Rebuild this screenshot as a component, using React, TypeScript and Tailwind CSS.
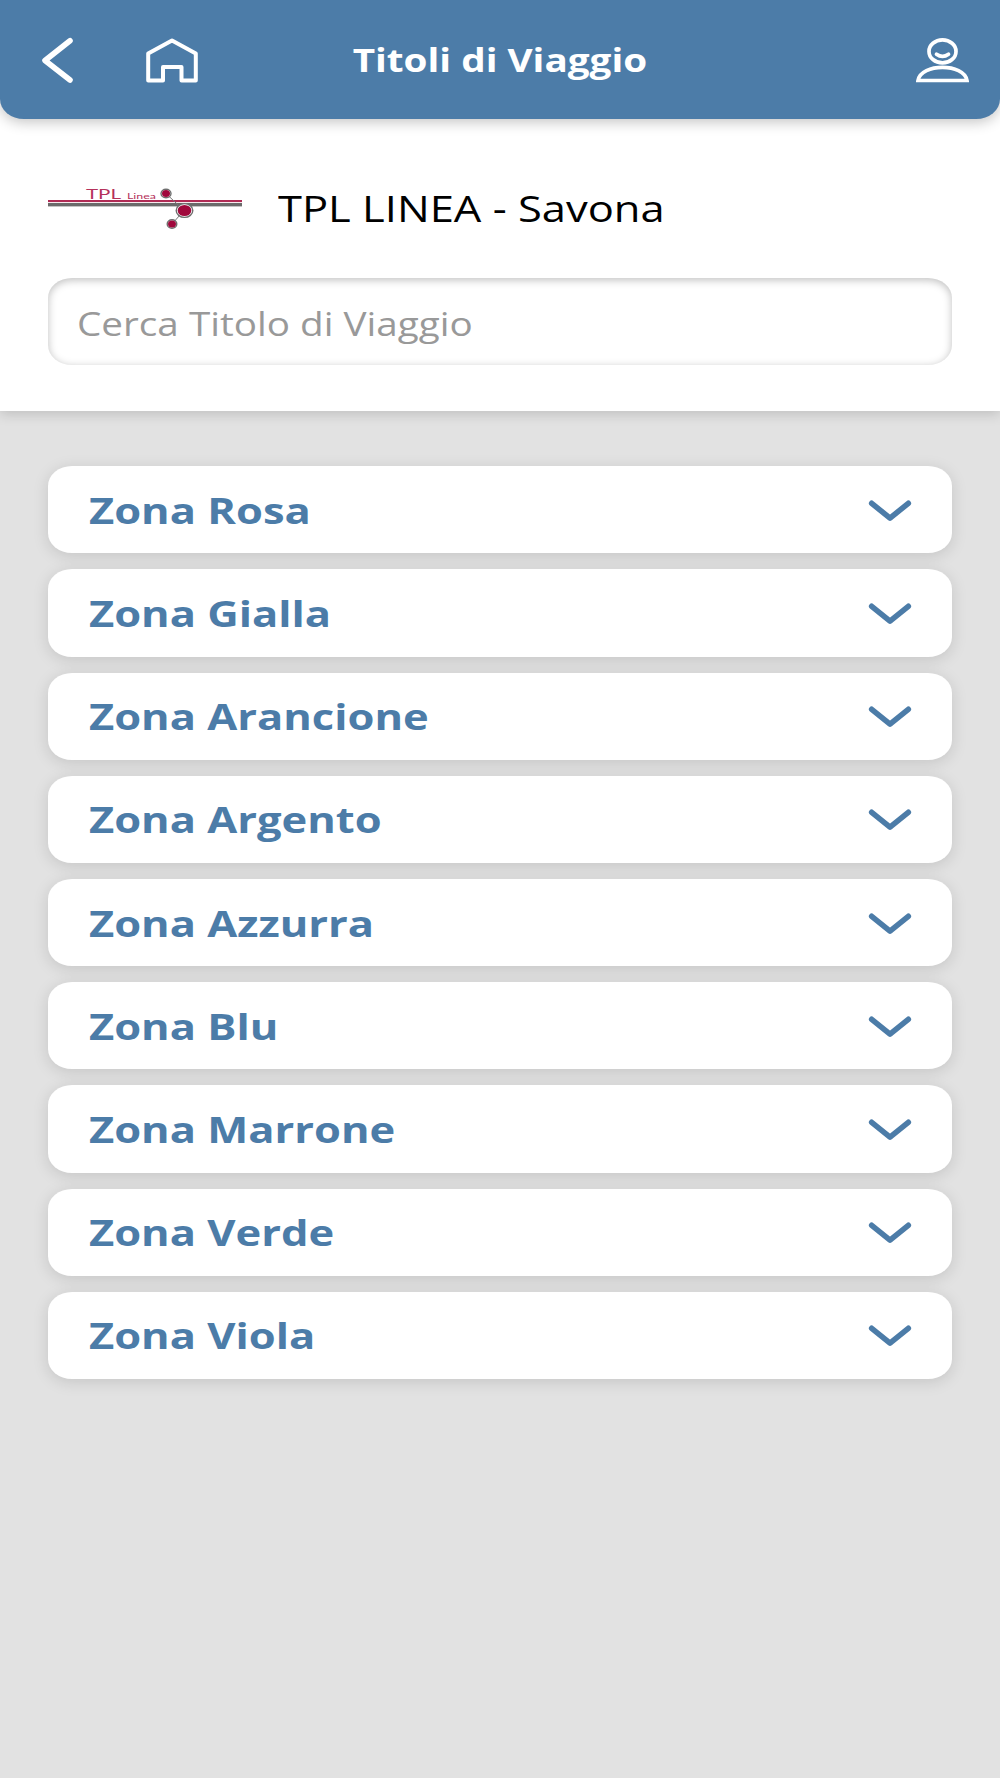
import { useState } from 'react'

interface Zone {
  id: string
  name: string
}

const T = {
  title: 'Titoli di Viaggio',
  company: 'TPL LINEA - Savona',
  search: 'Cerca Titolo di Viaggio',
  back: 'Indietro',
  home: 'Home',
  profile: 'Profilo',
}

const ZONES: Zone[] = [
  { id: 'rosa', name: 'Zona Rosa' },
  { id: 'gialla', name: 'Zona Gialla' },
  { id: 'arancione', name: 'Zona Arancione' },
  { id: 'argento', name: 'Zona Argento' },
  { id: 'azzurra', name: 'Zona Azzurra' },
  { id: 'blu', name: 'Zona Blu' },
  { id: 'marrone', name: 'Zona Marrone' },
  { id: 'verde', name: 'Zona Verde' },
  { id: 'viola', name: 'Zona Viola' },
]

export default function App() {
  const [query, setQuery] = useState('')
  const zones = ZONES.filter(z => z.name.toLowerCase().includes(query.toLowerCase()))

  return (
    <div className="flex min-h-[1778px] w-full flex-col bg-[#e2e2e2] font-['Open_Sans',sans-serif]">
      <div className="z-10 h-[410.5px] shrink-0 bg-white shadow-[0_3px_12px_rgba(0,0,0,0.16)]">
        <Header />

        {/* Company */}
        <div className="mt-[54px] flex h-[72px] items-center pl-12">
          <TplLogo />
          <h2 className="ml-[36px] origin-left scale-x-[1.208] whitespace-nowrap text-[36px] leading-[48px] text-black">
            {T.company}
          </h2>
        </div>

        {/* Search */}
        <div className="mx-[48.4px] mt-[33px] flex h-[87px] items-center overflow-hidden rounded-[24px/20px] bg-white pl-[29px] pt-1 shadow-[inset_0_2px_8px_rgba(0,0,0,0.26)]">
          <input
            type="text"
            value={query}
            onChange={e => setQuery(e.target.value)}
            placeholder={T.search}
            className="w-[700px] origin-left scale-x-[1.208] bg-transparent text-[32px] leading-[44px] text-black outline-none placeholder:text-[#999999]"
          />
        </div>
      </div>

      {/* Zones */}
      <ul className="flex flex-col gap-[16px] px-[48.3px] pt-[55.7px]">
        {zones.map(z => (
          <li key={z.id}>
            <ZoneRow name={z.name} />
          </li>
        ))}
      </ul>
    </div>
  )
}

function Header() {
  return (
    <header className="grid h-[119px] grid-cols-[1fr_auto_1fr] items-center rounded-[0_0_24px_24px/0_0_20px_20px] bg-[#4c7ca8] px-[31px] shadow-[0_3px_14px_rgba(0,0,0,0.24)]">
      <div className="flex items-center gap-[68px] pl-[8px] pt-px">
        <button aria-label={T.back}>
          <BackIcon />
        </button>
        <button aria-label={T.home}>
          <HomeIcon />
        </button>
      </div>
      <h1 className="scale-x-[1.208] whitespace-nowrap pt-px text-[32px] font-bold leading-[44px] text-white">{T.title}</h1>
      <button aria-label={T.profile} className="justify-self-end pt-px">
        <ProfileIcon />
      </button>
    </header>
  )
}

function ZoneRow({ name }: { name: string }) {
  return (
    <button className="flex h-[87.2px] w-full items-center justify-between rounded-[24px/20px] bg-white pl-[40.6px] pr-[39px] pt-[2px] shadow-[0_3px_16px_rgba(0,0,0,0.13)]">
      <span className="origin-left scale-x-[1.208] whitespace-nowrap text-[36px] font-bold leading-[48px] text-[#4c7ca8]">
        {name}
      </span>
      <ChevronIcon />
    </button>
  )
}

function BackIcon() {
  return (
    <svg width="36" height="48" viewBox="0 0 36 48" fill="none" stroke="white" strokeWidth="5.6"
      strokeLinecap="round" strokeLinejoin="round" aria-hidden="true">
      <path d="M31 4.8 L6 24.5 L31 44" />
    </svg>
  )
}

function HomeIcon() {
  return (
    <svg width="56" height="48" viewBox="0 0 56 48" fill="none" stroke="white" strokeWidth="4"
      strokeLinejoin="round" aria-hidden="true">
      <path d="M29 4.4 L52.8 17.6 V44.5 H38.5 V31 H20 V44.5 H5.2 V17.6 Z" />
    </svg>
  )
}

function ProfileIcon() {
  return (
    <svg width="53" height="48" viewBox="0 0 53 48" fill="none" stroke="white" strokeWidth="3.7"
      strokeLinecap="round" aria-hidden="true">
      <ellipse cx="26.5" cy="15.4" rx="13.5" ry="11.5" />
      <path d="M20.5 18.2 Q26.500 22.7 32.5 18.2" />
      <path d="M2 44.500 C5 27 48 27 51 44.5 Z" />
    </svg>
  )
}

function ChevronIcon() {
  return (
    <svg width="46" height="24" viewBox="0 0 46 24" fill="none" stroke="#4c7ca8" strokeWidth="5.6"
      strokeLinecap="round" strokeLinejoin="round" aria-hidden="true">
      <path d="M4.7 4.3 L23 19.2 L41.3 4.3" />
    </svg>
  )
}

function TplLogo() {
  return (
    <svg width="194" height="50" viewBox="0 0 194 50" aria-hidden="true">
      <text x="38" y="14.5" fontSize="13.5" textLength="35" lengthAdjust="spacingAndGlyphs" fill="#b5315b"
        fontFamily="Lato, sans-serif">TPL</text>
      <text x="79" y="14.5" fontSize="8" textLength="29" lengthAdjust="spacingAndGlyphs" fill="#b5315b"
        fontFamily="Lato, sans-serif">Linea</text>
      <rect y="16" width="194" height="2.1" fill="#b02a54" />
      <rect y="19" width="194" height="3.4" fill="#6a6a6a" />
      <path d="M118 9.5 L136 26.5 L124 40" fill="none" stroke="#777" />
      <g stroke="#6e6e6e" strokeWidth="1.4" fill="#fff">
        <ellipse cx="118" cy="9.5" rx="5" ry="4.3" />
        <ellipse cx="136.5" cy="26.5" rx="8.3" ry="6.9" />
        <ellipse cx="124" cy="40" rx="4.8" ry="4.2" />
      </g>
      <g fill="#a0083c">
        <ellipse cx="118" cy="9.5" rx="4" ry="3.5" />
        <ellipse cx="136.5" cy="26.5" rx="6.8" ry="5.6" />
        <ellipse cx="124" cy="40" rx="4" ry="3.5" />
      </g>
    </svg>
  )
}
